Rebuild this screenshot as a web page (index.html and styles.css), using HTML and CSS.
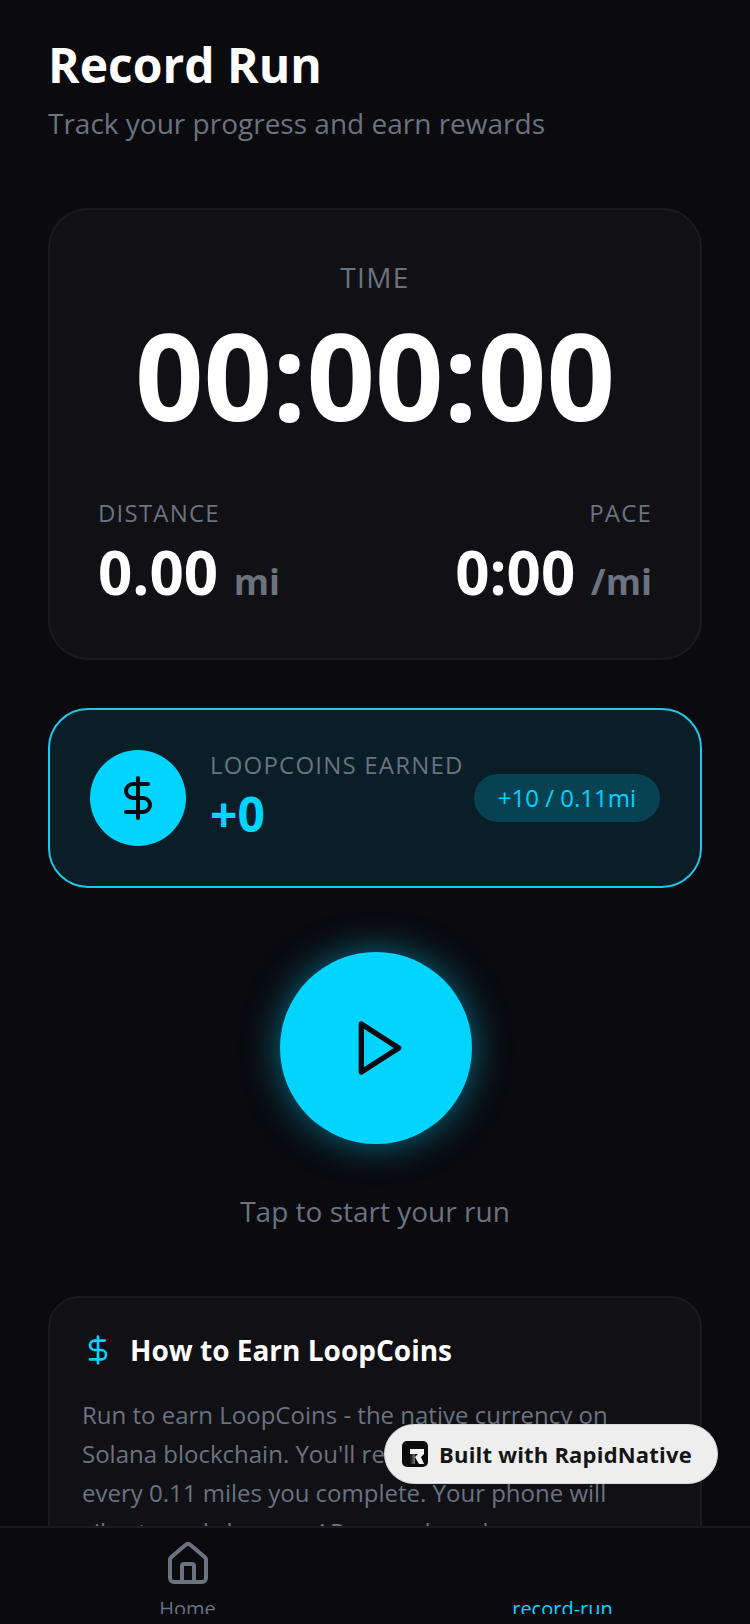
FILE: index.html
```html
<!DOCTYPE html>
<html lang="en">
<head>
  <meta charset="UTF-8" />
  <meta name="viewport" content="width=device-width, initial-scale=1" />
  <title>Record Run</title>
  <link rel="stylesheet" href="styles.css">
</head>
<body>
  <main class="content">
    <h1 class="page-title">Record Run</h1>
    <p class="page-sub">Track your progress and earn rewards</p>

    <section class="timer-card">
      <div class="time-label">TIME</div>
      <div class="time-value">00:00:00</div>
      <div class="stats">
        <div class="stat">
          <div class="stat-label">DISTANCE</div>
          <div class="stat-value">0.00 <span class="stat-unit">mi</span></div>
        </div>
        <div class="stat stat-right">
          <div class="stat-label">PACE</div>
          <div class="stat-value">0:00 <span class="stat-unit">/mi</span></div>
        </div>
      </div>
    </section>

    <section class="coins-card">
      <div class="coin">
        <svg class="icon-48" viewBox="0 0 24 24"><path d="M12 2v20"/><path d="M17 5H9.5a3.5 3.5 0 0 0 0 7h5a3.5 3.5 0 0 1 0 7H6"/></svg>
      </div>
      <div class="coins-text">
        <div class="coins-label">LOOPCOINS EARNED</div>
        <div class="coins-value">+0</div>
      </div>
      <div class="rate-pill">+10 / 0.11mi</div>
    </section>

    <div class="start">
      <button class="play-btn" type="button">
        <svg class="icon-64" viewBox="0 0 24 24"><polygon points="5 3 19 12 5 21 5 3"/></svg>
      </button>
      <p class="start-hint">Tap to start your run</p>
    </div>

    <section class="info-card">
      <div class="info-head">
        <svg class="icon-32" viewBox="0 0 24 24"><path d="M12 2v20"/><path d="M17 5H9.5a3.5 3.5 0 0 0 0 7h5a3.5 3.5 0 0 1 0 7H6"/></svg>
        <h2 class="info-title">How to Earn LoopCoins</h2>
      </div>
      <p class="info-body">Run to earn LoopCoins - the native currency on Solana blockchain. You'll receive 10 LoopCoins for every 0.11 miles you complete. Your phone will vibrate and show an AR reward mode</p>
    </section>
  </main>

  <nav class="tabbar">
    <div class="tab">
      <svg class="icon-48" viewBox="0 0 24 24"><path d="M15 21v-8a1 1 0 0 0-1-1h-4a1 1 0 0 0-1 1v8"/><path d="M3 10a2 2 0 0 1 .709-1.528l7-5.999a2 2 0 0 1 2.582 0l7 5.999A2 2 0 0 1 21 10v9a2 2 0 0 1-2 2H5a2 2 0 0 1-2-2z"/></svg>
      <span class="tab-label">Home</span>
    </div>
    <div class="tab tab-active">
      <span class="tab-icon-space"></span>
      <span class="tab-label">record-run</span>
    </div>
  </nav>

  <div class="built-badge">
    <span class="built-logo">
      <svg viewBox="0 0 26 26">
        <defs>
          <linearGradient id="stem-fade" x1="0" y1="0" x2="1" y2="0">
            <stop offset="0" stop-color="#0c0c0c"/>
            <stop offset="1" stop-color="#777777"/>
          </linearGradient>
        </defs>
        <path class="logo-r" d="M8 8h14v5l-3 3 3 7h-5l-4-7 3-3H8z"/>
        <rect class="logo-stem" x="8" y="13" width="5" height="10" fill="url(#stem-fade)"/>
      </svg>
    </span>
    <span class="built-text">Built with RapidNative</span>
  </div>
</body>
</html>
```

FILE: styles.css
```css
* {
  box-sizing: border-box;
}
html, body {
  margin: 0;
  height: 1624px;
}
body {
  position: relative;
  display: flex;
  flex-direction: column;
  overflow: hidden;
  background: #0a0a0f;
  color: #fff;
  font-family: "Open Sans", sans-serif;
}

svg {
  display: block;
  flex: none;
  fill: none;
  stroke: currentColor;
  stroke-width: 2;
  stroke-linecap: round;
  stroke-linejoin: round;
}
.icon-32 { width: 32px; height: 32px; }
.icon-48 { width: 48px; height: 48px; }
.icon-64 { width: 64px; height: 64px; }

.content {
  flex: 1;
  min-height: 0;
  overflow: hidden;
  padding: 32px 48px 0;
}

.page-title {
  margin: 0;
  font-size: 48px;
  font-weight: 700;
  line-height: 65px;
}
.page-sub {
  margin: 7px 0 0;
  font-size: 28px;
  line-height: 38px;
  color: #6b7280;
}

.timer-card {
  margin-top: 66px;
  height: 452px;
  padding: 48px;
  background: #101015;
  border: 2px solid #1a1a22;
  border-radius: 40px;
}
.time-label {
  text-align: center;
  font-size: 28px;
  line-height: 38px;
  letter-spacing: 1.4px;
  color: #6b7280;
}
.time-value {
  margin-top: -3px;
  text-align: center;
  font-size: 120px;
  font-weight: 700;
  line-height: 163px;
}
.stats {
  display: flex;
  justify-content: space-between;
  margin-top: 40px;
}
.stat-right {
  text-align: right;
}
.stat-label {
  font-size: 24px;
  line-height: 33px;
  letter-spacing: 1.2px;
  color: #6b7280;
}
.stat-value {
  margin-top: 7px;
  font-size: 60px;
  font-weight: 700;
  line-height: 72px;
}
.stat-unit {
  font-size: 36px;
  font-weight: 700;
  color: #6b7280;
}

.coins-card {
  display: flex;
  align-items: center;
  margin-top: 48px;
  padding: 40px;
  background: #091e27;
  border: 2px solid #1fc8e8;
  border-radius: 40px;
}
.coin {
  display: flex;
  flex: none;
  align-items: center;
  justify-content: center;
  width: 96px;
  height: 96px;
  border-radius: 50%;
  background: #00d4ff;
  color: #0a0a0f;
}
.coins-text {
  flex: 1;
  height: 96px;
  margin-left: 24px;
}
.coins-label {
  font-size: 24px;
  line-height: 30px;
  letter-spacing: 1.2px;
  color: #6b7280;
}
.coins-value {
  margin-top: 1px;
  font-size: 48px;
  font-weight: 700;
  line-height: 66px;
  color: #00d4ff;
}
.rate-pill {
  padding: 8px 24px;
  border-radius: 24px;
  background: rgba(0, 212, 255, 0.2);
  color: #00d4ff;
  font-size: 24px;
  line-height: 32px;
}

.start {
  display: flex;
  flex-direction: column;
  align-items: center;
  margin-top: 64px;
}
.play-btn {
  display: flex;
  align-items: center;
  justify-content: center;
  width: 192px;
  height: 192px;
  margin-left: 2px;
  padding: 0;
  border: none;
  border-radius: 50%;
  background: #00d4ff;
  color: #0a0a0f;
  box-shadow: 0 0 36px rgba(0, 212, 255, 0.5);
}
.play-btn svg {
  margin-left: 8px;
}
.start-hint {
  margin: 48px 0 0;
  font-size: 28px;
  line-height: 38px;
  color: #6b7280;
}

.info-card {
  margin-top: 66px;
  padding: 33px 32px 32px;
  background: #101015;
  border: 2px solid #1a1a22;
  border-radius: 32px;
}
.info-head {
  display: flex;
  align-items: center;
  gap: 16px;
}
.icon-32 {
  color: #00d4ff;
}
.info-title {
  margin: 0;
  font-size: 28px;
  font-weight: 700;
  line-height: 38px;
}
.info-body {
  margin: 26px 0 0;
  font-size: 24px;
  line-height: 39px;
  color: #6b7280;
}

.tabbar {
  display: flex;
  flex: none;
  height: 98px;
  padding-top: 12px;
  background: #0a0a0f;
  border-top: 2px solid #1a1a22;
}
.tab {
  display: flex;
  flex: 1;
  flex-direction: column;
  align-items: center;
  height: 74px;
  overflow: hidden;
  color: #6b7280;
}
.tab-active {
  color: #00d4ff;
}
.tab-icon-space {
  flex: none;
  height: 48px;
}
.tab-label {
  flex: none;
  margin-top: 7px;
  font-size: 20px;
  line-height: 27px;
}

/* floats over the page */
.built-badge {
  position: absolute;
  top: 1424px;
  left: 384px;
  display: flex;
  align-items: center;
  gap: 11px;
  width: 334px;
  height: 60px;
  padding-left: 17px;
  background: #eeeeee;
  border: 1px solid #d8d8d8;
  border-radius: 30px;
  color: #151515;
}
.built-logo {
  flex: none;
  width: 26px;
  height: 26px;
  border-radius: 5px;
  background: #0c0c0c;
}
.logo-r {
  fill: #f2f2f2;
  stroke: none;
}
.logo-stem {
  stroke: none;
}
.built-text {
  font-size: 22px;
  font-weight: 700;
  letter-spacing: 0.2px;
  white-space: nowrap;
}
```
